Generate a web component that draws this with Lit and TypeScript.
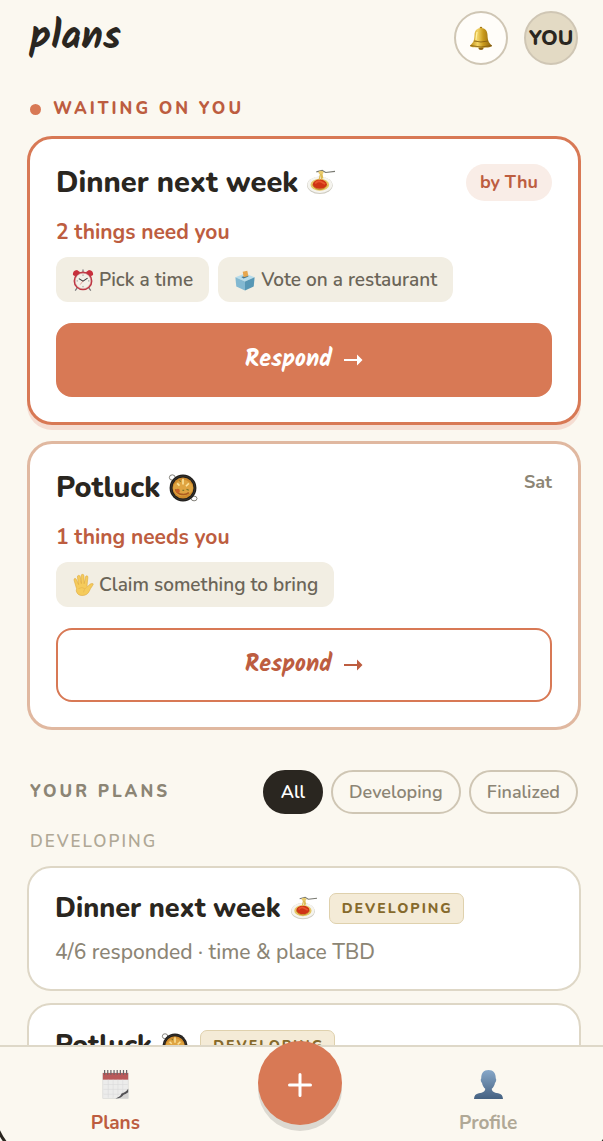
import { LitElement, html, svg, css, nothing } from 'lit';
import { customElement, property, state } from 'lit/decorators.js';
import { classMap } from 'lit/directives/class-map.js';

type Task = { icon: string; label: string };
type Pending = { title: string; icon: string; due: string; urgent: boolean; need: string; tasks: Task[] };
type Plan = { title: string; icon: string; status: string; detail: string };

const PENDING: Pending[] = [
  {
    title: 'Dinner next week',
    icon: 'spaghetti',
    due: 'by Thu',
    urgent: true,
    need: '2 things need you',
    tasks: [
      { icon: 'clock', label: 'Pick a time' },
      { icon: 'ballot', label: 'Vote on a restaurant' },
    ],
  },
  {
    title: 'Potluck',
    icon: 'pan',
    due: 'Sat',
    urgent: false,
    need: '1 thing needs you',
    tasks: [{ icon: 'hand', label: 'Claim something to bring' }],
  },
];

const PLANS: Plan[] = [
  { title: 'Dinner next week', icon: 'spaghetti', status: 'Developing', detail: '4/6 responded · time & place TBD' },
  { title: 'Potluck', icon: 'pan', status: 'Developing', detail: '' },
];

const FILTERS = ['All', 'Developing', 'Finalized'];

const ICONS: Record<string, unknown> = {
  bell: svg`
    <defs>
      <linearGradient id="g" x1="0" x2="1">
        <stop offset="0" stop-color="#b8860f" /><stop offset=".35" stop-color="#f3d465" />
        <stop offset=".6" stop-color="#c99a1c" /><stop offset="1" stop-color="#8a6110" />
      </linearGradient>
    </defs>
    <circle cx="12" cy="2" r="1.3" fill="#a87a14" />
    <ellipse cx="12" cy="22" rx="2.6" ry="2" fill="#8b6212" />
    <path d="M12 2C7.500 2 5.700 5 5.500 9C5.300 14 4.600 16.500 1 19.500C.500 21 5 21.700 12 21.700S23.500 21 23 19.500C19.400 16.500 18.700 14 18.500 9C18.300 5 16.500 2 12 2Z" fill="url(#g)" />
    <path d="M5 15Q12 17 19 15M1.500 19.600Q12 22.400 22.500 19.600" fill="none" stroke="#80590f" stroke-width=".8" />
    <path d="M8 6Q7.300 10 7 14" fill="none" stroke="#fff0a0" stroke-width="1.300" />`,
  spaghetti: svg`
    <ellipse cx="11" cy="14" rx="11" ry="7.500" fill="#cfccc2" />
    <ellipse cx="11" cy="13.500" rx="10.600" ry="7.100" fill="#f5f4ef" />
    <ellipse cx="11" cy="13.500" rx="8" ry="5.200" fill="#e6c766" />
    <path d="M5 14Q7 10 11 10T17 14Q15 17.500 11 17.500T5 14" fill="none" stroke="#b98928" stroke-width=".8" />
    <ellipse cx="11" cy="13" rx="6" ry="3.900" fill="#cf3315" />
    <path d="M7 12.500Q9 9.500 12 11T15.500 13" fill="none" stroke="#e8562d" stroke-width="1.500" />
    <path d="M10.500 9L12 2.500M12.500 9V2.500M13.500 8L12.500 3" stroke="#dfbd55" stroke-width="1.100" />
    <path d="M8 2.500L13 1.200L16 3L24 2" fill="none" stroke="#777870" stroke-width="1" />
    <ellipse cx="12" cy="3" rx="2.300" ry="1.500" fill="#e8ca6b" />`,
  pan: svg`
    <g fill="none" stroke="#77756e" stroke-width=".8">
      <ellipse cx="2.800" cy="3" rx="2.500" ry="2.300" /><ellipse cx="21.500" cy="21" rx="2.500" ry="2" />
    </g>
    <circle cx="12" cy="12" r="11.500" fill="#1f1d1b" />
    <circle cx="12" cy="12" r="10.300" fill="none" stroke="#46413b" stroke-width=".5" />
    <circle cx="12" cy="12" r="9" fill="#cf8b2c" />
    <path d="M4.500 9Q11 2 17.500 7T17.500 17Q10 21 6 17T4.500 9" fill="#dfa441" />
    <path d="M5.500 13Q7 17 11 17.500T17 16" fill="none" stroke="#ad5c20" stroke-width="1.400" />
    <path d="M12 4V9M17 8L14.500 10.500M7 8L9 10" stroke="#fbe29a" stroke-width="1.400" />
    <path d="M15 13L17 14M9 5.500L10 6.500M11.500 14H13" stroke="#7d7429" stroke-width="1" />
    <circle cx="7.500" cy="14.500" r="1.800" fill="#c96125" />`,
  clock: svg`
    <path d="M6 20L3.500 23.500M18 20L20.500 23.500" stroke="#77757a" stroke-width="1.300" />
    <path d="M1 6.500Q.500 2 5.500 1.200L9 3.500L3.500 8Z" fill="#c92f3c" />
    <path d="M23 6.500Q23.500 2 18.500 1.200L15 3.500L20.500 8Z" fill="#c92f3c" />
    <path d="M12 .500V4" stroke="#87848a" stroke-width="1.500" />
    <circle cx="12" cy="13" r="10.300" fill="#bd3441" />
    <circle cx="12" cy="13" r="8.500" fill="#f3f0e8" stroke="#d8a0a0" stroke-width=".5" />
    <path d="M12 6V7.500M12 18.500V20M5 13H6.500M17.500 13H19" stroke="#777" stroke-width=".8" />
    <path d="M7.500 10.500L12 13.300L17 10" fill="none" stroke="#37363a" stroke-width="1.100" />
    <path d="M12 13L9 17" stroke="#c44" stroke-width=".5" />`,
  ballot: svg`
    <path d="M1.500 9L12 5L22.500 9L12 13.500Z" fill="#b7dceb" />
    <path d="M1.500 9L12 13.500V23.500L2.500 19Z" fill="#82b8d1" />
    <path d="M22.500 9L12 13.500V23.500L21.500 19Z" fill="#5797b5" />
    <path d="M8 8.800L13.500 7L16 8.200L10.500 10.300Z" fill="#43738c" />
    <path d="M9.500 3L14.500 1.800L15.700 7.500L10.500 9Z" fill="#e6a64e" />`,
  hand: svg`
    <path d="M5 16L2.300 7Q1.800 5.200 3 4.900T5 6.300L7.200 11.500L5.900 3.500Q5.700 1.700 7 1.500T9 3L10.200 10.500L10 1.900Q10.100 .400 11.500 .400T13 2L13.300 10.500L14.700 3.200Q15.200 1.700 16.400 2T17.300 4L16.300 13.500Q17.500 14 19 11.600Q21 9.800 23 10.600Q23.600 11.200 22.300 12.800Q20 16 18.700 19Q16.500 23.500 11 23.500Q6 23.500 4.600 18.500Z" fill="#f5cb5c" stroke="#dda637" stroke-width=".6" />
    <path d="M7 16Q11 13.500 14 16M12.500 20Q13 16 16 14.500" fill="none" stroke="#e3b04a" stroke-width=".6" />`,
  calendar: svg`
    <rect x="1.500" y="2.500" width="21" height="21" fill="#ececeb" stroke="#d5d4d2" stroke-width=".5" />
    <rect x="1.500" y="2.500" width="21" height="5.500" fill="#b95a5b" />
    <path d="M2 12H22M2 16H22M2 20H22M6 8V23M10 8V23M14 8V23M18 8V23" stroke="#dbdada" stroke-width=".5" />
    <path d="M3 0V4M5.600 0V4M8.200 0V4M10.800 0V4M13.400 0V4M16 0V4M18.600 0V4M21.200 0V4" stroke="#696468" stroke-width="1" />
    <path d="M12 23.500Q17 22 18 18Q21 18.500 22.500 15.500V23.500Z" fill="#d6d5d3" />
    <path d="M12 23.500Q16 22.500 17 19.500Q20 19 22.500 15.500V18.500Q20 20.500 18.700 20.500Q17 23.500 12 23.500" fill="#525154" />`,
  person: svg`
    <defs>
      <linearGradient id="g" x2="0" y2="1">
        <stop offset="0" stop-color="#87a8c9" /><stop offset="1" stop-color="#456181" />
      </linearGradient>
    </defs>
    <path d="M12 0C8 0 5.800 2.800 6 7C5.300 7.300 5.600 10 6.600 10.500C7 13 8 14.300 9.300 15.600C9.200 18 7.500 18.700 4 19.300C1.300 19.800 .200 21.200 0 24H24C23.800 21.200 22.700 19.800 20 19.300C16.500 18.700 14.800 18 14.700 15.600C16 14.300 17 13 17.400 10.500C18.400 10 18.700 7.300 18 7C18.200 2.800 16 0 12 0Z" fill="url(#g)" />`,
};

@customElement('plan-icon')
export class PlanIcon extends LitElement {
  @property() name = '';

  static styles = css`
    :host { display: block; flex: none; width: 24px; height: 24px; }
    svg { display: block; width: 100%; height: 100%; overflow: visible; }
  `;

  render() {
    return html`<svg viewBox="0 0 24 24" aria-hidden="true">${ICONS[this.name] ?? nothing}</svg>`;
  }
}

@customElement('pending-card')
export class PendingCard extends LitElement {
  @property({ attribute: false }) plan!: Pending;

  static styles = css`
    :host { display: block; }
    .card {
      background: #fff;
      border: 3px solid #e0b8a0;
      border-radius: 25px;
      padding: 25px 26px;
    }
    .urgent { border-color: #d87955; box-shadow: 0 5px 0 #f5ddd2; }
    .head { display: flex; justify-content: space-between; height: 38px; margin-bottom: 16px; }
    h2 {
      display: flex;
      align-items: center;
      gap: 9px;
      margin: 0;
      font-size: 29px;
      line-height: 38px;
      font-weight: 800;
      color: #2a2620;
    }
    h2 plan-icon { width: 28px; height: 28px; }
    .due { align-self: start; font-size: 18px; line-height: 26px; font-weight: 700; color: #8c8575; }
    .urgent .due { padding: 0 14px; border-radius: 19px; line-height: 37px; background: #f9ede7; color: #bd5d40; }
    .need { margin: 0 0 11px; font-size: 21px; line-height: 28px; font-weight: 700; color: #bd5d40; }
    ul { display: flex; flex-wrap: wrap; gap: 9px; margin: 0 0 21px; padding: 0; list-style: none; }
    li {
      display: flex;
      align-items: center;
      gap: 5px;
      padding: 1px 16px 0;
      border-radius: 12px;
      background: #f2eee3;
      color: #6b6558;
      font-size: 19px;
      line-height: 44px;
      font-weight: 600;
    }
    li plan-icon { width: 22px; height: 22px; }
    button {
      display: flex;
      align-items: center;
      justify-content: center;
      gap: 11px;
      width: 100%;
      height: 74px;
      padding: 0;
      border: 2px solid #d87955;
      border-radius: 16px;
      background: #fff;
      color: #bd5d40;
      font: 700 24px/36px Kalam, Lato, sans-serif;
      cursor: pointer;
    }
    .urgent button { background: #d87955; color: #fff; }
    .arrow { width: 20px; height: 12px; fill: currentColor; }
  `;

  render() {
    const p = this.plan;
    return html`
      <article class=${classMap({ card: true, urgent: p.urgent })}>
        <div class="head">
          <h2>${p.title}<plan-icon name=${p.icon}></plan-icon></h2>
          <span class="due">${p.due}</span>
        </div>
        <p class="need">${p.need}</p>
        <ul>
          ${p.tasks.map((t) => html`<li><plan-icon name=${t.icon}></plan-icon>${t.label}</li>`)}
        </ul>
        <button type="button">
          Respond
          <svg class="arrow" viewBox="0 0 20 12" aria-hidden="true"><path d="M1 5H14V.500L19.500 6L14 11.500V7H1Z" /></svg>
        </button>
      </article>
    `;
  }
}

@customElement('plan-card')
export class PlanCard extends LitElement {
  @property({ attribute: false }) plan!: Plan;

  static styles = css`
    :host { display: block; }
    .card {
      background: #fff;
      border: 2px solid #ded7c6;
      border-radius: 24px;
      padding: 25px 26px 23px;
    }
    .head { display: flex; align-items: center; gap: 12px; height: 31px; margin-bottom: 14px; }
    h3 {
      display: flex;
      align-items: center;
      gap: 10px;
      margin: 0;
      font-size: 27px;
      line-height: 31px;
      font-weight: 800;
      color: #2a2620;
    }
    h3 plan-icon { width: 26px; height: 26px; }
    .status {
      padding: 0 10px 0 12px;
      border: 1px solid #dfd1ad;
      border-radius: 7px;
      background: #f4ebd7;
      color: #866a2c;
      font-size: 14px;
      line-height: 29px;
      font-weight: 800;
      letter-spacing: 2px;
      text-transform: uppercase;
    }
    .detail { min-height: 28px; margin: 0; font-size: 21px; line-height: 28px; font-weight: 500; color: #8c8575; }
  `;

  render() {
    const p = this.plan;
    return html`
      <article class="card">
        <div class="head">
          <h3>${p.title}<plan-icon name=${p.icon}></plan-icon></h3>
          <span class="status">${p.status}</span>
        </div>
        <p class="detail">${p.detail}</p>
      </article>
    `;
  }
}

@customElement('app-root')
export class AppRoot extends LitElement {
  @state() private filter = 'All';

  static styles = css`
    :host {
      position: relative;
      display: flex;
      flex-direction: column;
      height: 100vh;
      overflow: hidden;
      background: #fbf8f0;
      color: #2a2620;
      font-family: Nunito, Lato, sans-serif;
    }
    main {
      flex: 1;
      min-height: 0;
      padding: 11px 22px 0 27px;
      overflow-y: auto;
      scrollbar-width: none;
    }
    button { padding: 0; font-family: inherit; cursor: pointer; }
    header, .section { display: flex; align-items: center; justify-content: space-between; padding: 0 3px; }
    h1 { margin: 0; font: 700 39px/54px Kalam, Lato, sans-serif; }
    .actions { display: flex; gap: 16px; }
    .round {
      display: flex;
      align-items: center;
      justify-content: center;
      width: 54px;
      height: 54px;
      border: 2px solid #cfc6b4;
      border-radius: 50%;
      background: #fffdf9;
      color: #2a2620;
      font-size: 21px;
      font-weight: 800;
    }
    .avatar { background: #e3dac4; }
    .label {
      margin: 0;
      font-size: 17px;
      line-height: 24px;
      font-weight: 800;
      letter-spacing: 3px;
      text-transform: uppercase;
      color: #8c8575;
    }
    .waiting { display: flex; align-items: center; gap: 12px; padding: 0 3px; margin: 32px 0 15px; color: #bd5d40; }
    .dot { width: 11px; height: 11px; border-radius: 50%; background: #d87955; }
    .stack { display: grid; gap: 16px; }
    .section { margin: 40px 0 16px; }
    .filters { display: flex; gap: 8px; }
    .filters button {
      height: 44px;
      padding: 0 16px;
      border: 2px solid #cfc6b4;
      border-radius: 22px;
      background: none;
      color: #8c8575;
      font-size: 18px;
      font-weight: 600;
    }
    .filters .on { border-color: #2a2620; background: #2a2620; color: #fff; }
    .group { margin: 0 0 12px; padding: 0 3px; font-weight: 600; letter-spacing: 2px; color: #b0a896; }
    .plans { gap: 12px; padding-bottom: 24px; }
    nav {
      position: relative;
      display: flex;
      justify-content: space-around;
      height: 94px;
      padding: 0 27px 0 32px;
      border-top: 2px solid #ded8c8;
      background: #fbf8f0;
    }
    nav a {
      display: flex;
      flex-direction: column;
      align-items: center;
      gap: 12px;
      padding-top: 23px;
      color: #b0a896;
      font-size: 19px;
      line-height: 24px;
      font-weight: 700;
      text-decoration: none;
    }
    nav a plan-icon { width: 29px; height: 29px; }
    nav .current { color: #bd5d40; }
    .fab {
      display: grid;
      place-items: center;
      width: 84px;
      height: 84px;
      margin-top: -6px;
      border: 0;
      border-radius: 50%;
      background: #d87955;
      box-shadow: 0 6px 0 #dcd9d1;
    }
    .fab svg { width: 26px; height: 26px; margin-top: 4px; fill: none; stroke: #fff; stroke-width: 3; stroke-linecap: round; }
    .bezel {
      position: absolute;
      inset: -70px -14px -31px -9px;
      border: 3px solid #2a2620;
      border-radius: 70px;
      pointer-events: none;
    }
  `;

  render() {
    const shown = PLANS.filter((p) => this.filter === 'All' || p.status === this.filter);
    return html`
      <main>
        <header>
          <h1>plans</h1>
          <div class="actions">
            <button class="round" type="button" aria-label="Notifications"><plan-icon name="bell"></plan-icon></button>
            <button class="round avatar" type="button">YOU</button>
          </div>
        </header>

        <h2 class="label waiting"><span class="dot"></span>Waiting on you</h2>
        <div class="stack">${PENDING.map((p) => html`<pending-card .plan=${p}></pending-card>`)}</div>

        <div class="section">
          <h2 class="label">Your plans</h2>
          <div class="filters">
            ${FILTERS.map(
              (f) => html`
                <button
                  type="button"
                  class=${classMap({ on: f === this.filter })}
                  aria-pressed=${f === this.filter}
                  @click=${() => (this.filter = f)}
                >${f}</button>
              `
            )}
          </div>
        </div>
        ${shown.length ? html`<h3 class="label group">Developing</h3>` : nothing}
        <div class="stack plans">${shown.map((p) => html`<plan-card .plan=${p}></plan-card>`)}</div>
      </main>

      <nav>
        <a class="current" href="#plans"><plan-icon name="calendar"></plan-icon>Plans</a>
        <button class="fab" type="button" aria-label="New plan">
          <svg viewBox="0 0 26 26" aria-hidden="true"><path d="M13 2.500V23.500M2.500 13H23.500" /></svg>
        </button>
        <a href="#profile"><plan-icon name="person"></plan-icon>Profile</a>
      </nav>
      <div class="bezel"></div>
    `;
  }
}
